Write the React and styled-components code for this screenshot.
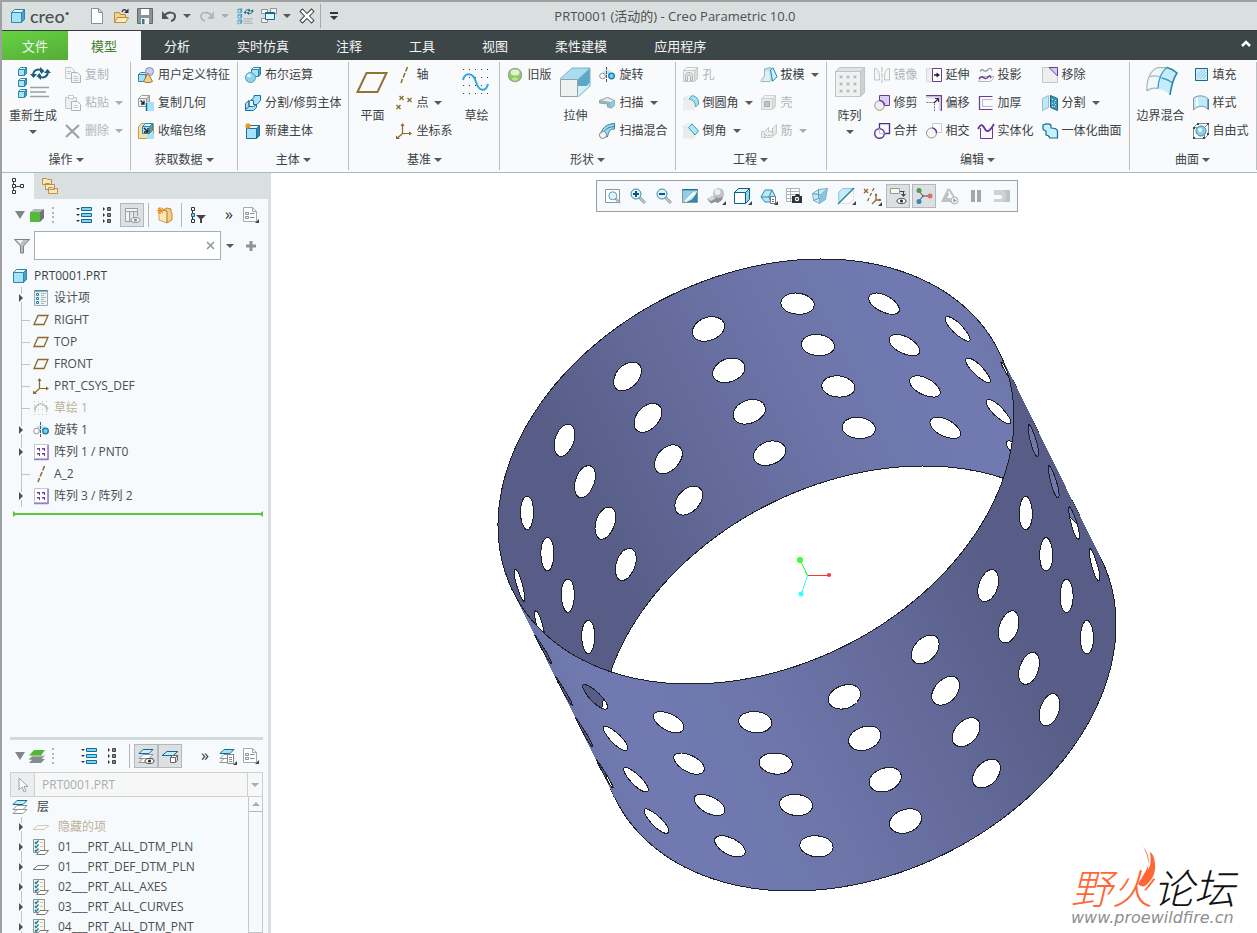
import React, { useState } from "react";
import styled, { createGlobalStyle, css } from "styled-components";

const GlobalStyle = createGlobalStyle`
  * {
    box-sizing: border-box;
  }
  body {
    margin: 0;
    color: #3c4143;
    font-family: "Open Sans", "Noto Sans CJK SC", sans-serif;
    font-size: 12px;
    line-height: 16px;
    background: #ffffff;
  }
  button, input, select {
    margin: 0;
    padding: 0;
    border: none;
    background: none;
    color: inherit;
    font: inherit;
  }
  ul {
    margin: 0;
    padding: 0;
    list-style: none;
  }
`;

/* ---------- icons ---------- */

const BLUE = "#156a8f";
const SKY = "#a6e3fa";
const GREY = "#8f9496";
const PALE = "#c4c8c9";
const PURPLE = "#6a3b9c";
const BROWN = "#8a6a2a";

const cube = (x, y, s, d, front, top, side, line) => (
  <g stroke={line} strokeLinejoin="round">
    <path d={`M${x} ${y + d}l${d} ${-d}h${s}l${-d} ${d}z`} fill={top} />
    <path d={`M${x + s} ${y + d}l${d} ${-d}v${s}l${-d} ${d}z`} fill={side} />
    <path d={`M${x} ${y + d}h${s}v${s}h${-s}z`} fill={front} />
  </g>
);

const skyCube = (x, y, s, d) => cube(x, y, s, d, SKY, "#e3f7fe", "#4aa3c6", "#2f86ab");

const listLines = (
  <>
    <path d="M0 1h4l-2 2zM0 7h4l-2 2zM0 13h4l-2 2z" fill="#333" />
    <path d="M5.500 .500h10v3h-10zM5.500 6.500h10v3h-10zM5.500 12.500h10v3h-10z" fill="#7fd4f7" stroke={BLUE} />
  </>
);

const sheets = (top) => (
  <>
    <path d="M1 14.500l4-4h10l-4 4z" fill="#fff" stroke={GREY} />
    <path d="M1 10.500l4-4h10l-4 4z" fill="#fff" stroke={GREY} />
    <path d="M1 5.500l4-4h10l-4 4z" fill={top} stroke={BLUE} />
  </>
);

const layerSheet = (
  <>
    <path d="M.5.500h11v13H.5z" fill="#fdf6e3" stroke={GREY} />
    <path d="M2 3l1 1.500 2.500-3M2 7l1 1.500 2.500-3M2 11l1 1.500 2.500-3" fill="none" stroke="#1484bd" strokeWidth="1.400" />
    <path d="M7 3.500h3M7 7.500h3" stroke={PALE} />
    <path d="M3.500 15.500l3.500-4h8.500l-3.500 4z" fill="#fff" stroke="#777" />
  </>
);

const revolve = (
  <>
    <path d="M3 8C4 1 12 1 14 8z" fill="#bfe6f5" />
    <circle cx="3.500" cy="9" r="2.800" fill="#fff" stroke={GREY} />
    <circle cx="12.500" cy="9" r="2.800" fill="#6fd0f5" stroke="#1b7ba6" strokeWidth="1.300" />
    <path d="M7.500 0v16" stroke="#555" strokeDasharray="3 1" />
  </>
);

const csys = (
  <>
    <path d="M6.500 1v9.500H15M6.500 10.500L1 15.500" fill="none" stroke={BROWN} strokeWidth="1.200" />
    <path d="M4.500 3l2-3 2 3M13 8.500l3 2-3 2M0 12.500V16h4" fill={BROWN} />
  </>
);

const axis = <path d="M11.500 0L9.700 4.500M9 6L7.200 10.500M6.500 12L5 16" stroke={BROWN} strokeWidth="1.500" />;

const patternSmall = (
  <>
    <path d="M1.500.500h14v14h-14z" fill="#fff" stroke={PALE} />
    <path d="M15 1v14.500H1" fill="none" stroke="#9a7cc4" strokeWidth="1.500" />
    <path d="M4 4h3v3H6V5.500H4zM9 4h3v3h-1V5.500H9zM4 9h3v3H6v-1.500H4zM9 9h3v3h-1v-1.500H9z" fill={PURPLE} />
  </>
);

const plane = <path d="M1 12.500L5 3.500h10l-4 9z" fill="none" stroke={BROWN} strokeWidth="1.300" />;

const docIcon = (
  <>
    <path d="M.5.500h9l4 4v10H.5z" fill="#fff" stroke="#a4a9ab" />
    <path d="M9.500.500v4h4" stroke="#a4a9ab" />
    <path d="M2.500 5.500h3v2h-3zM2.500 9.500h3v2h-3zM7 6.500h4.500M7 10.500h4.500" fill="none" stroke="#8b9194" />
    <path d="M16 12v4h-4z" fill="#444" />
  </>
);

const regen = (
  <>
    {skyCube(1.500, 1.500, 6, 2)}
    {skyCube(1.500, 12.500, 6, 2)}
    {skyCube(1.500, 23.500, 6, 2)}
    <path d="M13 21.500h19M13 26h16M13 30.500h19" stroke="#9a9fa1" strokeWidth="1.500" />
    <path d="M16 10c0-6 5-8 9-5M31 5c0 6-5 8-9 5" fill="none" stroke="#1d5d7d" strokeWidth="2" />
    <path d="M13 8h7l-3.500 4zM27 7h7l-3.500-4zM23 1l4.500 4-4.500 4zM24 6l-4.500 4 4.500 4z" fill="#1d5d7d" />
  </>
);

const magnifier = (
  <>
    <path d="M9.500 9.500l5.500 5.500" stroke="#9aa0a3" strokeWidth="3" />
    <path d="M10 10l5 5" stroke="#d9dcde" strokeWidth="1" />
    <circle cx="6" cy="6" r="5" fill="#dff4fc" stroke="#3b87aa" />
  </>
);

const icons = {
  part: skyCube(1.500, 1.500, 10, 3),
  newFile: <path d="M2.500.500h7l4 4v11h-11zM9.500 .500v4h4" fill="#fff" stroke="#8a8f92" />,
  open: (
    <>
      <path d="M1.500 14.500V4.500h5l1 2h5v8z" fill="#f2d18a" stroke="#b98f3d" />
      <path d="M1.500 14.500l3-5h11l-3 5z" fill="#ffe9b8" stroke="#b98f3d" />
      <path d="M9 4c1-3 3-3 4.500-1" fill="none" stroke="#333" strokeWidth="1.400" />
      <path d="M15.500.500V5H11z" fill="#333" />
    </>
  ),
  save: (
    <>
      <path d="M.5.500h15v15H.5z" fill="#8c9295" stroke="#66696b" />
      <path d="M4 1h8v6H4z" fill="#fff" />
      <path d="M4 10h8v6H4z" fill="#eef0f1" />
      <path d="M5 11h2.500v5H5z" fill="#2a7ba0" />
    </>
  ),
  undo: (
    <>
      <path d="M3 8c4-5 11-4 11 0 0 3-2 4.500-4 5" fill="none" stroke="#4d5356" strokeWidth="2" />
      <path d="M1 3v8h7z" fill="#4d5356" />
    </>
  ),
  redo: (
    <>
      <path d="M13 8C9 3 2 4 2 8c0 3 2 4.500 4 5" fill="none" stroke="#a9aeb0" strokeWidth="1.500" />
      <path d="M15 3v8H8z" fill="#b5b9bb" />
    </>
  ),
  regen,
  windows: (
    <>
      <path d="M.5 1.500h6v4h-6zM.5 10.500h6v4h-6z" fill="#f3f5f5" stroke={GREY} />
      <path d="M9.500.500h6v5h-6z" fill="#f3f5f5" stroke={GREY} />
      <path d="M4.500 4.500h9v7h-9z" fill="#e4f7fd" stroke={BLUE} />
      <path d="M4 5.500h10" stroke={BLUE} />
    </>
  ),
  close: (
    <>
      <path d="M3.500 3.500l9 9M12.500 3.500l-9 9" stroke="#3b3f41" strokeWidth="4.500" strokeLinecap="square" />
      <path d="M3.500 3.500l9 9M12.500 3.500l-9 9" stroke="#fff" strokeWidth="2.500" strokeLinecap="square" />
    </>
  ),
  customize: <path d="M4 4h8v2H4zM4 8h8l-4 4z" fill="#333" />,
  copy: (
    <>
      <path d="M.5.500h6l3 3v8h-9z" fill="#f3f4f5" stroke={PALE} />
      <path d="M6.500 5.500h6l3 3v7h-9z" fill="#f3f4f5" stroke="#afb3b5" />
      <path d="M2 4.500h4M2 6.500h3M8.500 9.500h4M8.500 11.500h5M8.500 13.500h5" stroke={PALE} />
    </>
  ),
  paste: (
    <>
      <path d="M.5 2.500h11v11H.5z" fill="#eceeef" stroke={PALE} />
      <path d="M3.500.500h5v3h-5z" fill="#fff" stroke={PALE} />
      <path d="M6.500 6.500h6l3 3v6h-9z" fill="#f8f9fa" stroke="#afb3b5" />
      <path d="M8.500 10.500h4M8.500 12.500h5" stroke={PALE} />
    </>
  ),
  del: <path d="M1 2l13 13M14 2L1 14" stroke="#9da2a4" strokeWidth="2.200" />,
  udf: (
    <>
      {skyCube(.5, 5.500, 7, 2)}
      <circle cx="11.500" cy="4.500" r="4" fill="#c9cdf3" stroke="#8087c4" />
      <path d="M10 6l4.500 8.500c-2 1.500-7 1.500-9 0z" fill="#f2d08c" stroke="#a37b2e" />
    </>
  ),
  copyGeom: (
    <>
      {cube(.5, .5, 8, 3, "#eef0f1", "#f7f8f8", "#c4c8c9", "#999fa1")}
      <path d="M2.500 5.500l3 3M6 5.500v3.500H3" fill="none" stroke="#222" strokeWidth="1.300" />
      <path d="M9 7h7v9H9z" fill={SKY} />
      <path d="M8.500 8v8" stroke={BLUE} strokeWidth="1.500" />
    </>
  ),
  shrink: (
    <>
      <path d="M.5 3.500l3-3h12v12l-3 3H.5z" fill="#f6dfae" stroke="#c49a48" />
      {skyCube(4.500, .5, 7, 3)}
      <path d="M6 5l3.500 3.500M10 5v4H6" fill="none" stroke="#222" strokeWidth="1.300" />
      <path d="M9 11h7v5H9z" fill={SKY} />
    </>
  ),
  bool: (
    <>
      {skyCube(6.500, .5, 7, 2)}
      <circle cx="5.500" cy="10.500" r="5" fill="#8fd3ea" stroke="#4f9dba" />
      <ellipse cx="4" cy="8.500" rx="2" ry="1.500" fill="#e6f8fd" />
    </>
  ),
  splitBody: (
    <g fill={SKY} stroke="#1b6f99">
      <path d="M5.500 5.500L9 2.500V.500h6.500v5L12 9.500H8.500v-4z" />
      <path d="M.5 8.500l3.500-3v6h4.500l3-2v3l-3 3h-8z" />
      <path d="M4 5.500v6l-3.500 3" fill="none" />
    </g>
  ),
  newBody: (
    <>
      {cube(1.500, 2.500, 10, 3, SKY, "#e8f8fe", "#2f87ad", "#1b6f99")}
      <path d="M3 0v6M0 3h6M1 1l4 4M5 1L1 5" stroke="#e8951c" strokeWidth="1.200" />
    </>
  ),
  planeBig: <path d="M1.500 26L10.500 7h20l-9 19z" fill="none" stroke="#937235" strokeWidth="2" />,
  axis,
  points: <path d="M4 1l4 4M8 1L4 5M12 3l4 4M16 3l-4 4M1 10l4 4M5 10l-4 4" stroke={BROWN} strokeWidth="1.300" transform="translate(-.5 0)" />,
  csys,
  sketchBig: (
    <>
      <g fill="#444">
        {[3, 11, 19, 27].map((y) => [3, 9, 15, 21, 27].map((x) => <rect key={`${x}-${y}`} x={x} y={y} width="1" height="1" />))}
      </g>
      <path d="M3 14c2-8 10-8 13 2s10 10 12 2" fill="none" stroke="#35a9dc" strokeWidth="2" />
    </>
  ),
  legacy: (
    <>
      <circle cx="8" cy="8" r="6.500" fill="#8fd05c" stroke="#9aa79a" strokeWidth="1.500" />
      <ellipse cx="8" cy="5.500" rx="4.500" ry="3" fill="#dff3cf" />
      <ellipse cx="8" cy="12" rx="3" ry="1.500" fill="#b9e690" />
    </>
  ),
  extrudeBig: (
    <>
      <path d="M1 13L13 2h18L19 13z" fill="#a9dcf0" />
      <path d="M19 13L31 2v18L19 31z" fill="#5ba8c9" />
      <path d="M19 31L31 19v-3z" fill="#c9edf9" />
      <path d="M19 31V20h12z" fill="#d3f1fb" />
      <path d="M1 13L13 2h18v18L19 31" fill="none" stroke="#7ab4cc" />
      <path d="M1.500 13.500h17v17h-17z" fill="#f0f1f1" stroke="#9a9fa1" />
    </>
  ),
  revolve,
  sweep: (
    <>
      <path d="M.5 5.500l8-3 7 3v5l-3 2.500-4-1v-3l-8-1z" fill="#93b7c3" stroke="#8ba4ad" />
      <path d="M.5 5.500l8-3 7 3-4 2z" fill="#e3eef2" stroke="#9fafb5" />
      <path d="M11.500 8v5l4-2.500v-5z" fill="#86cfe6" />
    </>
  ),
  sweepBlend: (
    <>
      <path d="M2 10C4 4 8 1 15.500.500V6c-5 0-6 3-7 8z" fill="#9ed7ea" stroke="#2f7fa0" />
      <path d="M4.500 10c2-4 5-6 11-6.500" fill="none" stroke="#2f7fa0" />
      <ellipse cx="4" cy="12" rx="3.500" ry="3.200" fill="#f2f4f5" stroke={GREY} transform="rotate(-30 4 12)" />
    </>
  ),
  hole: (
    <>
      {cube(.5, .5, 11, 3, "#eff0f0", "#f6f7f7", "#dadcdd", "#c6cacb")}
      <path d="M2.500 13.500v-5c0-4 7-4 7 0v5h-2v-4c0-2-3-2-3 0v4z" fill="#e2e4e5" stroke="#aeb2b4" />
    </>
  ),
  round: (
    <>
      <path d="M0 4.500h7c4 0 5 4 5 6v5H0z" fill="#eceded" />
      <path d="M0 4L4 1h5L6 4z" fill="#f6f7f7" stroke="#dcdfe0" />
      <path d="M6 4c5 1 6.500 4 6.500 8l3-3C16 4 13 1 9 .700z" fill="#a5e2f7" stroke="#4a9dbd" />
    </>
  ),
  chamfer: (
    <>
      <path d="M0 4.500h6l6 6v5H0z" fill="#e9ebeb" />
      <path d="M0 4l4-3h5L6 4z" fill="#f6f7f7" stroke="#dcdfe0" />
      <path d="M5.500 4.500L9 1l6.500 7-3.500 4z" fill="#a5ecfb" stroke="#3f8fae" />
    </>
  ),
  draft: (
    <>
      <path d="M0 13.500L3.500 9V2L9 .500l3 2v9l-3 3H0z" fill="#bfe0eb" stroke="#8fb9c9" />
      <path d="M9.500 3L12 .800l4 9-4.500 4.500z" fill="#c9f1fc" stroke="#2487b0" />
      <path d="M0 14h9L8 4 4 4.500V10z" fill="#e3eef2" />
    </>
  ),
  shell: (
    <>
      {cube(.5, .5, 11, 3, "#e8eaea", "#f0f1f1", "#dcdfe0", "#cfd2d3")}
      <path d="M3.500 6.500h5v5h-5z" fill="#bfc3c4" stroke="#aaaeb0" />
    </>
  ),
  rib: (
    <>
      <path d="M.5 8.500v6h10l5-4v-9l-4 4v3h-4v-4l-4 4z" fill="#ebeded" stroke="#c6cacb" />
      <path d="M3.500 15V9.500M11.500 5v7M4 12.500h7l4-4" fill="none" stroke="#b8bcbe" strokeDasharray="2 1" />
    </>
  ),
  patternBig: (
    <>
      {cube(1.500, 1.500, 25, 4, "#f0f1f1", "#dfe2e2", "#cdd1d2", "#c0c4c6")}
      <g fill="#b3b8ba" stroke="#dfe1e2">
        {[9, 16, 23].map((y) => [5, 12, 19].map((x) => <rect key={`${x}-${y}`} x={x + .5} y={y + .5} width="3" height="3" />))}
      </g>
    </>
  ),
  mirror: (
    <>
      <path d="M.5 1.500c4 0 5 4 5 11.500h-5zM15.500 1.500c-4 0-5 4-5 11.500h5z" fill="#f6f7f7" stroke="#bfc3c5" />
      <path d="M8 0v16" stroke="#b5b9bb" strokeDasharray="5 1" />
    </>
  ),
  trim: (
    <>
      <path d="M5.500.500h10v10h-10z" fill="#dcd0f2" stroke={PURPLE} />
      <circle cx="5.500" cy="10.500" r="4.800" fill="#eeefef" stroke={GREY} />
      <path d="M5.500 5.500a5 5 0 0 1 5 5" fill="none" stroke={PURPLE} strokeWidth="1.500" />
    </>
  ),
  merge: (
    <>
      <path d="M5.500 5V.700h10v9.800H11" fill="none" stroke="#4a2f86" strokeWidth="1.300" />
      <circle cx="5.500" cy="10.500" r="4.800" fill="#fff" stroke="#5c3896" strokeWidth="1.400" />
      <path d="M5.500 5.500v5h5" fill="none" stroke={PALE} />
    </>
  ),
  extend: (
    <>
      <path d="M.5 1.500h6v13h-6z" fill="#f0f0f0" stroke="#d5d8d9" />
      <path d="M6.500 1.500h9v13h-9z" fill="#fff" stroke={PURPLE} />
      <path d="M8 8h3" stroke="#222" strokeWidth="1.500" />
      <path d="M10.500 5.500L14 8l-3.500 2.500z" fill="#222" />
    </>
  ),
  offset: (
    <>
      <path d="M0 .700h15.300V16" fill="none" stroke={PURPLE} strokeWidth="1.400" />
      <path d="M0 2.500h13.500V16" fill="none" stroke="#e2d8f0" strokeWidth="2" />
      <path d="M.5 7.500h8V16" fill="none" stroke="#777" strokeDasharray="2 1" />
      <path d="M8 8l4-4M9 3.500h3.500V7" fill="none" stroke="#333" strokeWidth="1.200" />
    </>
  ),
  intersect: (
    <>
      <path d="M6.500.500h9v9h-9z" fill="#fff" stroke={PALE} />
      <circle cx="5.500" cy="10" r="5" fill="#f6f6f6" stroke={GREY} />
      <path d="M6.500 5a5 5 0 0 1 4 5" fill="none" stroke={PURPLE} strokeWidth="1.500" />
    </>
  ),
  project: (
    <>
      <path d="M2 4.500c3-5 4 2 7-1s4-3 5 0" fill="none" stroke={GREY} strokeWidth="1.200" />
      <path d="M.5 14.500l3-5h12v2l-3 3z" fill="#f6f6f6" stroke="#b5b9bb" />
      <path d="M1 12c3-6 5 2 8-1s3-3 4 0" fill="none" stroke={PURPLE} strokeWidth="1.400" />
    </>
  ),
  thicken: (
    <>
      <path d="M14.500 1.500h-13v13h13" fill="none" stroke={PURPLE} strokeWidth="1.200" />
      <path d="M14.500 4.500h-10v7h10" fill="none" stroke="#bbb" />
    </>
  ),
  solidify: (
    <>
      <path d="M2.500 5v10.500h12V4" fill="#faf8fd" stroke={PURPLE} />
      <path d="M0 6c3-6 5-4 7 0s5 2 9-5" fill="none" stroke={PURPLE} strokeWidth="1.800" />
    </>
  ),
  remove: (
    <>
      <path d="M.5.500h15v15H.5z" fill="#eeeeef" stroke="#c3c6c7" />
      <path d="M7 .500h8.500v8.500z" fill="#d7caf0" stroke={PURPLE} />
    </>
  ),
  split: (
    <>
      <path d="M.5 3.500l6-3v12l-6 3z" fill="#bdeaf9" stroke="#9abccb" />
      <path d="M8.500.500l7 3v12l-7-3z" fill="#3e93b7" stroke={BLUE} />
      <path d="M10 4l1 1M13 5l1 1M10 8l1 1M13 9l1 1M10 11l1 1M12 7l1 1M12 11l1 1" stroke="#c8eefb" />
    </>
  ),
  quilt: <path d="M1 2c3-1.500 6-1.500 8 0v3c3 0 6 1 6.500 3v7H8c-1-2-2-3-4-3v-4C2 7.500 1 6 1 6z" fill="#c6f0fc" stroke={BLUE} strokeWidth="1.200" />,
  boundaryBig: (
    <>
      <path d="M2 25C1 15 4 4 13 1.500h8c4 0 8 3 11 5.500-4 6-6 15-7 22-5-5-16-7-23-4z" fill="#eef9fd" />
      <path d="M32 7c-4 6-6 15-7 22-4-4-8-6-12-6.500 0-9 4-18 10-21.500" fill="#c6ecfa" />
      <path d="M2 25C1 15 5 4 13 1.500h8M2 25c4-4 8-3 11-2.500M5 11c4-2 8-1 12 1M13 1.500c3 0 6 0 9 .5" fill="none" stroke="#aeb3b5" strokeWidth="1.200" />
      <path d="M13 22.500c0-9 4-18 10-21.500M17 12c5 1 8 3 11 5" fill="none" stroke="#3aa0c9" strokeWidth="1.300" />
      <path d="M22 1.500c4 1 7 3 10 5.500-4 6-6 15-7 22" fill="none" stroke="#2f86ab" strokeWidth="1.600" />
    </>
  ),
  fill: (
    <>
      <path d="M2.500 1.500h12v12h-12z" fill="#c9eefb" stroke={BLUE} />
      <path d="M4 9l5-6M4 12l8-9M7 12l6-7M10 12l3-4" stroke="#8fc8dd" />
    </>
  ),
  style: (
    <>
      <path d="M.5 3C5 0 11 0 15.500 4v11C12 10 5 10 .5 15z" fill="#bfeaf9" stroke={GREY} />
      <path d="M4 3v8" stroke="#fff" strokeWidth="2" />
      <path d="M15 4v10" stroke={BLUE} />
    </>
  ),
  freestyle: (
    <>
      <path d="M.5 4.500h11v11H.5zM.5 4.500l4-4h11v11l-4 4M11.500 4.500l4-4" fill="none" stroke="#888" />
      <circle cx="8" cy="8" r="5" fill="#8bd0ea" stroke="#3b8fb4" />
      <circle cx="7" cy="7" r="2" fill="#e6f8fd" />
      <path d="M0 4h2v2H0zM0 14h2v2H0zM10 14h2v2h-2zM4 0h2v2H4zM14 0h2v2h-2zM14 10h2v2h-2z" fill="#444" />
    </>
  ),

  treeTab: (
    <>
      <path d="M3.500 4v3M3.500 10v2M5 8.500h5" stroke="#444" />
      <path d="M2.500.500h3v3h-3zM2.500 6.500h3v3h-3zM2.500 12.500h3v3h-3zM10.500 6.500h3v3h-3z" fill="#fff" stroke="#333" />
    </>
  ),
  folders: (
    <g fill="#fbe7bd" stroke="#b8924a">
      <path d="M.5.500h4l1 1h4v5h-9zM3.500 5.500h4l1 1h4v5h-9zM6.500 9.500h4l1 1h4v5h-9z" />
    </g>
  ),
  greenPart: (
    <>
      <path d="M1 5l4-3h10l-3 3z" fill="#b4b9bb" />
      <path d="M11 5l4-3v9l-4 4z" fill="#6f7578" />
      <path d="M1 5h10v10H1z" fill="#55b93a" />
    </>
  ),
  dots: <path d="M7 0h2v2H7zM7 5h2v2H7zM7 9h2v2H7zM7 14h2v2H7z" fill="#b1b6b8" />,
  expand: listLines,
  collapse: (
    <>
      <path d="M3 0v4l2-2zM3 6v4l2-2zM3 12v4l2-2z" fill="#333" />
      <path d="M7.500.500h3v3h-3zM7.500 6.500h3v3h-3zM7.500 12.500h3v3h-3z" fill="#888" stroke="#444" />
    </>
  ),
  columns: (
    <>
      <path d="M1.500 1.500h12v3h-12zM1.500 4.500v10h4v-10M5.500 14.500h4v-10M13.500 4.500V9" fill="#f3f4f4" stroke="#9a9fa1" />
      <ellipse cx="11.500" cy="13" rx="4.500" ry="2.500" fill="#f3f4f4" stroke="#8a8f91" />
      <circle cx="11.500" cy="13" r="1.600" fill="#8a8f91" />
    </>
  ),
  newFolder: (
    <>
      <path d="M2 3l8 1v12l-8-3z" fill="#ffe8b5" stroke="#c9a35c" />
      <path d="M6 3l4-2 4 1v3l1 1v7l-5 3V4z" fill="#f6cf85" stroke="#b58a3d" />
      <path d="M3 0v7M0 3.500h6M1 1l5 5M6 1L1 6" stroke="#f08c1a" strokeWidth="1.200" />
    </>
  ),
  treeFilter: (
    <>
      <path d="M2.500 4v8" stroke="#333" />
      <path d="M1.500 .500h3v3h-3zM1.500 12.500h3v3h-3z" fill="#fff" stroke="#333" />
      <path d="M1.500 6.500h3v3h-3z" fill="#7fd4f7" stroke={BLUE} />
      <path d="M6 8h10l-4 4v4h-2v-4z" fill="#444" />
    </>
  ),
  doc: docIcon,
  funnel: (
    <>
      <path d="M.5 1.500h15L9.500 8v7h-3V8z" fill="#b9bec0" stroke="#7b8082" />
      <path d="M3 2h6L6.500 6z" fill="#f2f3f3" />
    </>
  ),
  designItems: (
    <>
      <path d="M1.500.500h13v15h-13z" fill="#eef3f5" stroke="#a4a9ab" />
      <path d="M1.500 1h13" stroke={BLUE} />
      <path d="M3.500 3.500h2v2h-2zM3.500 7.500h2v2h-2zM3.500 11.500h2v2h-2z" fill="#fff" stroke="#1783b5" />
      <path d="M8 3.500h5M8 5.500h3M8 7.500h5M8 9.500h3M8 11.500h5M8 13.500h3" stroke="#b0b5b7" />
    </>
  ),
  plane,
  sketchOff: (
    <>
      <path d="M2 12c0-11 12-11 12 0M1 9l2-3M15 9l-2-3" fill="none" stroke="#c4c6c0" strokeWidth="1.400" />
      <g fill="#c5c3ba">
        {[1, 5, 9, 14].map((y) => [1, 5, 9, 13].map((x) => <rect key={`${x}-${y}`} x={x} y={y} width="1" height="1" />))}
      </g>
    </>
  ),
  pattern: patternSmall,
  greenLayers: (
    <>
      <path d="M0 15l4-4h12l-4 4zM0 11.500l4-4h12l-4 4z" fill="#858b8e" />
      <path d="M0 10.500l4-3h12l-4 3z" fill="#d9dcdd" />
      <path d="M0 11.500l3-3h12l-3 3z" fill="#858b8e" />
      <path d="M0 7.500l5-5.500h11l-4 5.500z" fill="#51b836" />
    </>
  ),
  layerShow: (
    <>
      {sheets("#c9f0fc")}
      <ellipse cx="11.500" cy="13" rx="4.500" ry="2.500" fill="#fff" stroke="#444" />
      <circle cx="11.500" cy="13" r="1.600" fill="#333" />
    </>
  ),
  layerPart: (
    <>
      <path d="M0 7.500l5-4h11l-5 4z" fill="#c3eefb" stroke={BLUE} />
      {cube(8.500, 7.500, 5, 2, "#fff", "#fff", "#ddd", "#666")}
    </>
  ),
  layerDoc: (
    <>
      {sheets("#a6e3fa")}
      <path d="M8.500 6.500h6v9h-6z" fill="#fff" stroke="#888" />
      <path d="M10 9.500h3M10 11.500h3M10 13.500h3" stroke="#888" />
      <path d="M18 13v4h-4z" fill="#444" />
    </>
  ),
  layers: sheets("#bdebfb"),
  layerOff: <path d="M0 10.500l5-4h11l-5 4z" fill="#fdfbf2" stroke="#cfcab8" />,
  layerSheet,
  layerPlain: <path d="M0 10.500l5-4h11l-5 4z" fill="#fff" stroke="#777" />,
  cursor: <path d="M4 1v12l3-3 2 5 2-1-2-4.500h4z" fill="#f7f7f7" stroke="#9fa4a6" />,

  refit: (
    <>
      <path d="M1.500 1.500h14v13h-14z" fill="#fff" stroke={GREY} />
      <g transform="translate(4 3) scale(.8)">{magnifier}</g>
    </>
  ),
  zoomIn: (
    <>
      {magnifier}
      <path d="M3 6h6M6 3v6" stroke="#11567a" strokeWidth="2" />
    </>
  ),
  zoomOut: (
    <>
      {magnifier}
      <path d="M3 6h6" stroke="#11567a" strokeWidth="2" />
    </>
  ),
  repaint: (
    <>
      <path d="M.5 1.500h15v13H.5z" fill="#c6e9f5" stroke={GREY} />
      <path d="M.5 1h15v1.500H.5z" fill="#1b6f99" />
      <path d="M4 14c5-1 8-4 11-10v10z" fill="#2c88ae" />
      <path d="M1 3h13C9 5 6 9 4 14H1z" fill="#8fd0e6" />
      <path d="M3 13.500C6 11 9 7 13 5" stroke="#fff" strokeWidth="2" />
    </>
  ),
  shading: (
    <>
      <circle cx="10.500" cy="5.500" r="5.500" fill="#bfc3c5" />
      <circle cx="9.500" cy="4" r="3" fill="#eceeee" />
      <path d="M-1 11l5-3 6 2c3 0 5-1 6-4l-2 6-4 3-3-1-4 1.500z" fill="#8f9496" />
      <path d="M-1 11l5-3 4 2-5 3z" fill="#d4d7d8" />
      <path d="M18 13v4h-4z" fill="#444" />
    </>
  ),
  orient: (
    <>
      {cube(.5, .5, 11, 4, "#fff", "#d5f3fd", "#8ed6f0", "#11607f")}
      <path d="M18 13v4h-4z" fill="#444" />
    </>
  ),
  views: (
    <>
      <path d="M1 9l4-7h7l3 6-4 6H5z" fill="#b6eafa" stroke="#2d89ae" />
      <path d="M1 9h8l3-7M9 9l2 5" fill="none" stroke="#2d89ae" />
      <path d="M10.500 8.500h5v7h-5z" fill="#fff" stroke="#777" />
      <path d="M12 11.500h2M12 13.500h2" stroke="#777" />
      <path d="M18 13v4h-4z" fill="#444" />
    </>
  ),
  camera: (
    <>
      <path d="M.5.500h13v13H.5zM.5 3.500h13M.5 6.500h13M.5 10.500h13M4.500 .500v13" fill="#fff" stroke="#aeb3b5" />
      <path d="M6 8h3l1-2h3l1 2h2v7H6z" fill="#333" />
      <circle cx="11" cy="11" r="2.200" fill="#fff" />
      <circle cx="11" cy="11" r="1" fill="#333" />
    </>
  ),
  perspective: (
    <>
      <path d="M.5 5.500l6-4 9-1-2 11-6 4-6-3z" fill="#c6e9f4" stroke="#7fb0c2" />
      <path d="M.5 5.500l8 1.500 7-6.500M8.500 7l-1 8.500M6.500 1.500v9l-5 2M6.500 10.500l7 1" fill="none" stroke="#5a9fb9" />
      <path d="M8.500 7l7-6.500-2 11-6 4z" fill="#86c5dc" />
    </>
  ),
  section: (
    <>
      <path d="M.5 4.500l4-4h11L1 15z" fill="#c6ebf8" stroke="#8fc3d6" />
      <path d="M15.500 1v10l-4 4.500H1z" fill="#fbfbfb" stroke={PALE} strokeDasharray="1 1" />
      <path d="M0 16L16 0" stroke="#2b7da1" strokeWidth="1.200" />
      <path d="M18 13v4h-4z" fill="#444" />
    </>
  ),
  datums: (
    <>
      <path d="M0 1l4 4M4 1L0 5M10 0L8.500 3M7.500 5L6 8M5 10l-1.500 3M12 6v6h5M12 12l-4 4" fill="none" stroke={BROWN} strokeWidth="1.300" />
      <path d="M10.500 7.500L12 5l1.500 2.500zM15 10.500l2.500 1.500-2.500 1.500z" fill={BROWN} />
      <path d="M18 14v4h-4z" fill="#444" />
    </>
  ),
  annot: (
    <>
      <path d="M.5.500h9v5h-9z" fill="#fdf8e4" stroke="#999" />
      <path d="M10 3.500h4.500M13.500 4v3" stroke="#444" />
      <path d="M11 6h5l-2.500 3z" fill="#444" />
      <ellipse cx="11.500" cy="13" rx="4.500" ry="2.500" fill="#fff" stroke="#444" />
      <circle cx="11.500" cy="13" r="1.600" fill="#333" />
    </>
  ),
  spin: (
    <>
      <path d="M3 3l4 5M7 8h6M7 8l-4 5" stroke="#444" />
      <circle cx="3" cy="2.500" r="2.500" fill="#4c9b4a" />
      <circle cx="14" cy="8" r="2.500" fill="#d9706a" />
      <circle cx="3" cy="13.500" r="2.500" fill="#3a86b5" />
    </>
  ),
  simulate: (
    <>
      <path d="M6.500 1L.5 13h10M7 1l5 8M6.500 5l-3 6h5" fill="none" stroke="#bfc3c4" strokeWidth="2" />
      <circle cx="12.500" cy="12.500" r="3.500" fill="#f3f4f4" stroke="#a9adaf" />
      <path d="M11.500 10.500l3 2-3 2z" fill="#8f9496" />
    </>
  ),
  pause: <path d="M3 2h4v12H3zM9 2h4v12H9z" fill="#a3a8aa" />,
  stopFlow: (
    <>
      <path d="M0 2h16v12H0v-3h6c3 0 3-4 0-4H0z" fill="#cfd2d3" />
      <path d="M0 2h9c4 2 4 10 0 12h7V2z" fill="#bfc3c4" />
    </>
  ),
};

const bigIcons = ["regen", "planeBig", "sketchBig", "extrudeBig", "patternBig", "boundaryBig"];

const Svg = styled.svg`
  display: block;
  flex: none;
  overflow: visible;
`;

function Icon({ name, size = 16 }) {
  const box = bigIcons.includes(name) ? 32 : 16;
  return (
    <Svg width={size} height={size} viewBox={`0 0 ${box} ${box}`} fill="none" aria-hidden="true">
      {icons[name]}
    </Svg>
  );
}

const Caret = styled.span`
  flex: none;
  width: 0;
  height: 0;
  border: 4px solid transparent;
  border-top-color: ${(props) => (props.$off ? "#a9adaf" : "#55595b")};
  border-bottom: none;
`;

/* ---------- window, title and tabs ---------- */

const Window = styled.div`
  display: flex;
  flex-direction: column;
  height: 100vh;
  overflow: hidden;
  border-top: 2px solid #a0a0a0;
  border-left: 2px solid #a0a0a0;
`;

const TitleBar = styled.header`
  display: flex;
  flex: none;
  align-items: center;
  height: 28px;
  padding-left: 8px;
  background: #dae0df;
`;

const Brand = styled.span`
  margin: 0 20px 0 4px;
  color: #4b5052;
  font: 500 18px/24px Lato, sans-serif;
  sup {
    font-size: 8px;
    line-height: 8px;
  }
`;

const QuickBar = styled.div`
  display: flex;
  align-items: center;
  gap: 8px;
`;

const QuickButton = styled.button`
  display: flex;
  align-items: center;
  gap: 6px;
`;

const QuickRule = styled.span`
  width: 1px;
  height: 24px;
  margin: 0 -3px;
  background: #a4aaac;
`;

const WindowTitle = styled.div`
  flex: 1;
  padding-right: 20%;
  color: #4b5052;
  font-size: 13px;
  text-align: center;
  white-space: nowrap;
`;

const Tabs = styled.nav`
  display: flex;
  flex: none;
  height: 30px;
  background: #3d4647;
  border-top: 1px solid #343c3d;
`;

const Tab = styled.button`
  padding: 0 24px 0 23px;
  color: #f2f5f5;
  font-size: 13px;
  ${(props) =>
    props.$file &&
    css`
      padding: 0 20px;
      background: linear-gradient(165deg, #66d342, #55ab38);
    `}
  ${(props) =>
    props.$active &&
    css`
      background: #f8fafc;
      color: #43802a;
    `}
`;

const Collapse = styled.button`
  margin-left: auto;
  padding: 0 6px 6px;
`;

/* ---------- ribbon ---------- */

const Ribbon = styled.section`
  display: flex;
  flex: none;
  height: 113px;
  background: #f8fafc;
  border-bottom: 1px solid #a9bcbd;
`;

const Group = styled.div`
  display: flex;
  flex: none;
  flex-direction: column;
  margin: 2px 0;
  border-right: 1px solid #b9bfc1;
`;

const GroupBody = styled.div`
  display: flex;
  flex: none;
  gap: 8px;
  height: 83px;
  padding: 0 7px;
`;

const GroupLabel = styled.button`
  display: flex;
  flex: none;
  align-items: center;
  justify-content: center;
  gap: 3px;
  height: 27px;
  padding-top: 3px;
`;

const Column = styled.div`
  display: flex;
  flex-direction: column;
  margin-top: -1px;
`;

const Item = styled.button`
  display: flex;
  align-items: center;
  height: 28px;
  gap: 4px;
  color: ${(props) => (props.$off ? "#b1b5b7" : "#3c4143")};
  white-space: nowrap;
  ${Caret} {
    margin-left: 2px;
  }
`;

const BigItem = styled.button`
  display: flex;
  flex-direction: column;
  align-items: center;
  min-width: 32px;
  padding-top: 4px;
  white-space: nowrap;
  span:first-of-type {
    margin: 10px 0 6px;
  }
`;

const ribbon = [
  {
    label: "操作",
    parts: [
      { icon: "regen", text: "重新生成", menu: true },
      [
        ["copy", "复制", { off: true }],
        ["paste", "粘贴", { off: true, menu: true }],
        ["del", "删除", { off: true, menu: true }],
      ],
    ],
  },
  {
    label: "获取数据",
    parts: [
      [
        ["udf", "用户定义特征"],
        ["copyGeom", "复制几何"],
        ["shrink", "收缩包络"],
      ],
    ],
  },
  {
    label: "主体",
    parts: [
      [
        ["bool", "布尔运算"],
        ["splitBody", "分割/修剪主体"],
        ["newBody", "新建主体"],
      ],
    ],
  },
  {
    label: "基准",
    parts: [
      { icon: "planeBig", text: "平面" },
      [
        ["axis", "轴"],
        ["points", "点", { menu: true }],
        ["csys", "坐标系"],
      ],
      { icon: "sketchBig", text: "草绘" },
    ],
  },
  {
    label: "形状",
    parts: [
      [["legacy", "旧版"]],
      { icon: "extrudeBig", text: "拉伸" },
      [
        ["revolve", "旋转"],
        ["sweep", "扫描", { menu: true }],
        ["sweepBlend", "扫描混合"],
      ],
    ],
  },
  {
    label: "工程",
    parts: [
      [
        ["hole", "孔", { off: true }],
        ["round", "倒圆角", { menu: true }],
        ["chamfer", "倒角", { menu: true }],
      ],
      [
        ["draft", "拔模", { menu: true }],
        ["shell", "壳", { off: true }],
        ["rib", "筋", { off: true, menu: true }],
      ],
    ],
  },
  {
    label: "编辑",
    parts: [
      { icon: "patternBig", text: "阵列", menu: true },
      [
        ["mirror", "镜像", { off: true }],
        ["trim", "修剪"],
        ["merge", "合并"],
      ],
      [
        ["extend", "延伸"],
        ["offset", "偏移"],
        ["intersect", "相交"],
      ],
      [
        ["project", "投影"],
        ["thicken", "加厚"],
        ["solidify", "实体化"],
      ],
      [
        ["remove", "移除"],
        ["split", "分割", { menu: true }],
        ["quilt", "一体化曲面"],
      ],
    ],
  },
  {
    label: "曲面",
    parts: [
      { icon: "boundaryBig", text: "边界混合" },
      [
        ["fill", "填充"],
        ["style", "样式"],
        ["freestyle", "自由式"],
      ],
    ],
  },
];

function RibbonPart({ part }) {
  if (!Array.isArray(part)) {
    return (
      <BigItem type="button">
        <Icon name={part.icon} size={32} />
        <span>{part.text}</span>
        {part.menu && <Caret />}
      </BigItem>
    );
  }
  return (
    <Column>
      {part.map(([icon, text, opts = {}]) => (
        <Item key={text} type="button" $off={opts.off} disabled={opts.off}>
          <Icon name={icon} />
          {text}
          {opts.menu && <Caret $off={opts.off} />}
        </Item>
      ))}
    </Column>
  );
}

/* ---------- side panel ---------- */

const Work = styled.div`
  display: flex;
  flex: 1;
  min-height: 0;
`;

const Side = styled.aside`
  display: flex;
  flex: none;
  flex-direction: column;
  width: 269px;
  background: #f7fafc;
  border-right: 3px solid #dae0df;
`;

const SideTabs = styled.div`
  display: flex;
  flex: none;
  height: 26px;
  margin-right: -3px;
  background: #dae0df;
`;

const SideTab = styled.button`
  display: flex;
  align-items: center;
  justify-content: center;
  width: 32px;
  background: ${(props) => (props.$active ? "#f7fafc" : "transparent")};
`;

const ToolRow = styled.div`
  display: flex;
  flex: none;
  align-items: center;
  height: 32px;
  padding: 0 5px 0 13px;
`;

const Tool = styled.button`
  display: flex;
  flex: none;
  align-items: center;
  justify-content: center;
  width: 24px;
  height: 24px;
  border: 1px solid ${(props) => (props.$on ? "#b3b8ba" : "transparent")};
  background: ${(props) => (props.$on ? "#dddfe2" : "none")};
`;

const Fold = styled.span`
  flex: none;
  margin-right: 4px;
  border: 5px solid transparent;
  border-top: 8px solid #808688;
  border-bottom: none;
`;

const Rule = styled.span`
  flex: none;
  width: 1px;
  height: 24px;
  margin: 0 4px;
  background: #b3b9bb;
`;

const Spacer = styled.span`
  flex: 1;
`;

const More = styled.button`
  width: 16px;
  height: 24px;
  margin-right: 2px;
  padding-bottom: 3px;
  color: #333;
  font-size: 16px;
`;

const FilterRow = styled.div`
  display: flex;
  flex: none;
  align-items: center;
  gap: 4px;
  height: 29px;
  padding: 0 11px 0 12px;
`;

const FilterBox = styled.label`
  display: flex;
  flex: 1;
  align-items: center;
  height: 29px;
  padding: 0 0 0 4px;
  border: 1px solid #a4afb3;
  background: #ffffff;
  input {
    flex: 1;
    min-width: 0;
    outline: none;
  }
`;

const GreyGlyph = styled.button`
  width: 14px;
  color: #8f9496;
  svg {
    display: block;
  }
`;

const Tree = styled.ul`
  flex: none;
  padding-top: 5px;
`;

const Root = styled.li`
  display: flex;
  align-items: center;
  gap: 6px;
  height: 22px;
  padding-left: 10px;
`;

const Row = styled.li`
  display: flex;
  align-items: center;
  height: ${(props) => props.$height}px;
  color: ${(props) => (props.$dim ? "#bbb29b" : "#4a4e50")};
  white-space: nowrap;
`;

const Guide = styled.span`
  position: relative;
  flex: none;
  align-self: stretch;
  width: 12px;
  margin-left: 19px;
  border-left: 1px solid #bfc4c6;
  &::before {
    position: absolute;
    top: 50%;
    left: 0;
    content: "";
    ${(props) =>
      props.$open
        ? css`
            left: -3px;
            margin-top: -4px;
            border: 4px solid #f7fafc;
            border-left-color: #4c5052;
            border-right: 2px solid #f7fafc;
          `
        : css`
            width: 8px;
            border-top: 1px solid #bfc4c6;
          `}
  }
`;

const RowText = styled.span`
  margin-left: ${(props) => props.$gap}px;
`;

const InsertBar = styled.div`
  display: flex;
  flex: none;
  justify-content: space-between;
  margin: 4px 5px 0 11px;
  height: 6px;
  background: linear-gradient(#5fc63d, #5fc63d) 0 50% / 100% 2px no-repeat;
  &::before,
  &::after {
    content: "";
    border: 3px solid transparent;
    border-left: 4px solid #5fc63d;
    border-right: none;
  }
  &::after {
    border-left: none;
    border-right: 4px solid #5fc63d;
  }
`;

const LayerPane = styled.section`
  display: flex;
  flex: none;
  flex-direction: column;
  height: 196px;
  margin-top: auto;
`;

const Splitter = styled.div`
  flex: none;
  height: 3px;
  margin: 0 5px 0 8px;
  background: #d3dadb;
`;

const ModelPick = styled.div`
  display: flex;
  flex: none;
  align-items: center;
  height: 25px;
  margin: 0 5px 0 8px;
  border: 1px solid #cbd0d1;
  background: #f7f7f7;
  select {
    flex: 1;
    height: 100%;
    padding-left: 7px;
    border: solid #cbd0d1;
    border-width: 0 1px;
    color: #a9adaf;
    opacity: 1;
    appearance: none;
  }
  > span {
    display: flex;
    justify-content: center;
    align-items: center;
    align-self: stretch;
    width: 23px;
    background: #ebedee;
  }
  > span:last-child {
    width: 14px;
    background: none;
  }
`;

const LayerBody = styled.div`
  display: flex;
  flex: 1;
  min-height: 0;
  margin-right: 5px;
  overflow: hidden;
`;

const LayerTree = styled.ul`
  flex: 1;
`;

const LayerRoot = styled(Root)`
  height: 20px;
  gap: 9px;
`;

const ScrollTrack = styled.div`
  width: 15px;
  border: 1px solid #c3c8ca;
  border-top: none;
`;

const ScrollUp = styled.button`
  display: flex;
  align-items: center;
  justify-content: center;
  width: 13px;
  height: 15px;
  border-bottom: 1px solid #b3b8ba;
  ${Caret} {
    transform: rotate(180deg);
  }
`;

const modelRows = [
  { icon: "designItems", text: "设计项", open: true },
  { icon: "plane", text: "RIGHT" },
  { icon: "plane", text: "TOP" },
  { icon: "plane", text: "FRONT" },
  { icon: "csys", text: "PRT_CSYS_DEF" },
  { icon: "sketchOff", text: "草绘 1", dim: true },
  { icon: "revolve", text: "旋转 1", open: true },
  { icon: "pattern", text: "阵列 1 / PNT0", open: true },
  { icon: "axis", text: "A_2" },
  { icon: "pattern", text: "阵列 3 / 阵列 2", open: true },
];

const layerRows = [
  { icon: "layerOff", text: "隐藏的项", dim: true },
  { icon: "layerSheet", text: "01___PRT_ALL_DTM_PLN" },
  { icon: "layerPlain", text: "01___PRT_DEF_DTM_PLN" },
  { icon: "layerSheet", text: "02___PRT_ALL_AXES" },
  { icon: "layerSheet", text: "03___PRT_ALL_CURVES" },
  { icon: "layerSheet", text: "04___PRT_ALL_DTM_PNT" },
];

function SidePanel() {
  const [filter, setFilter] = useState("");
  return (
    <Side>
      <SideTabs>
        <SideTab type="button" $active aria-label="模型树">
          <Icon name="treeTab" />
        </SideTab>
        <SideTab type="button" aria-label="文件夹">
          <Icon name="folders" />
        </SideTab>
      </SideTabs>
      <ToolRow>
        <Fold />
        <Icon name="greenPart" />
        <Icon name="dots" />
        <Spacer />
        <Tool type="button" aria-label="展开"><Icon name="expand" /></Tool>
        <Tool type="button" aria-label="折叠"><Icon name="collapse" /></Tool>
        <Tool type="button" $on aria-label="树列"><Icon name="columns" /></Tool>
        <Rule />
        <Tool type="button" aria-label="新建文件夹"><Icon name="newFolder" /></Tool>
        <Rule />
        <Tool type="button" aria-label="树过滤器"><Icon name="treeFilter" /></Tool>
        <Spacer />
        <More type="button">»</More>
        <Tool type="button" aria-label="设置"><Icon name="doc" /></Tool>
      </ToolRow>
      <FilterRow>
        <Icon name="funnel" />
        <FilterBox>
          <input type="text" aria-label="过滤" value={filter} onChange={(e) => setFilter(e.target.value)} />
          <GreyGlyph type="button" aria-label="清除" onClick={() => setFilter("")}>
            <svg width="9" height="9" stroke="currentColor" strokeWidth="1.500">
              <path d="M1 1l7 7M8 1L1 8" />
            </svg>
          </GreyGlyph>
        </FilterBox>
        <GreyGlyph type="button" aria-label="过滤选项">
          <svg width="14" height="8" fill="#55595b">
            <path d="M1 2h8L5 6z" />
          </svg>
        </GreyGlyph>
        <GreyGlyph type="button" aria-label="添加">
          <svg width="14" height="12" stroke="currentColor" strokeWidth="3">
            <path d="M8 1v10M3 6h10" />
          </svg>
        </GreyGlyph>
      </FilterRow>
      <Tree>
        <Root>
          <Icon name="part" />
          PRT0001.PRT
        </Root>
        {modelRows.map((row) => (
          <Row key={row.text} $height={22} $dim={row.dim}>
            <Guide $open={row.open} />
            <Icon name={row.icon} />
            <RowText $gap={5}>{row.text}</RowText>
          </Row>
        ))}
      </Tree>
      <InsertBar />
      <LayerPane>
        <Splitter />
        <ToolRow>
          <Fold />
          <Icon name="greenLayers" />
          <Icon name="dots" />
          <Spacer />
          <Tool type="button" aria-label="展开层"><Icon name="expand" /></Tool>
          <Tool type="button" aria-label="折叠层"><Icon name="collapse" /></Tool>
          <Rule />
          <Tool type="button" $on aria-label="显示层"><Icon name="layerShow" /></Tool>
          <Tool type="button" $on aria-label="层零件"><Icon name="layerPart" /></Tool>
          <Spacer />
          <More type="button">»</More>
          <Tool type="button" aria-label="层树"><Icon name="layerDoc" /></Tool>
          <Tool type="button" aria-label="层设置"><Icon name="doc" /></Tool>
        </ToolRow>
        <ModelPick>
          <span>
            <Icon name="cursor" />
          </span>
          <select disabled aria-label="活动模型">
            <option>PRT0001.PRT</option>
          </select>
          <span>
            <Caret $off />
          </span>
        </ModelPick>
        <LayerBody>
          <LayerTree>
            <LayerRoot>
              <Icon name="layers" />层
            </LayerRoot>
            {layerRows.map((row) => (
              <Row key={row.text} $height={20} $dim={row.dim}>
                <Guide $open />
                <Icon name={row.icon} />
                <RowText $gap={9}>{row.text}</RowText>
              </Row>
            ))}
          </LayerTree>
          <ScrollTrack>
            <ScrollUp type="button" aria-label="向上滚动">
              <Caret $off />
            </ScrollUp>
          </ScrollTrack>
        </LayerBody>
      </LayerPane>
    </Side>
  );
}

/* ---------- graphics area ---------- */

const View = styled.main`
  position: relative;
  flex: 1;
  min-width: 0;
  background: #ffffff;
`;

const Scene = styled.svg`
  display: block;
  width: 100%;
  height: 100%;
`;

const ViewBar = styled.div`
  position: absolute;
  top: 7px;
  left: calc(50% - 168px);
  display: flex;
  gap: 2px;
  padding: 3px;
  border: 1px solid #9ba0a3;
  background: #f7fafc;
`;

const viewTools = [
  ["refit", "重新调整"],
  ["zoomIn", "放大"],
  ["zoomOut", "缩小"],
  ["repaint", "重画"],
  ["shading", "显示样式"],
  ["orient", "已保存方向"],
  ["views", "视图管理器"],
  ["camera", "视图图像"],
  ["perspective", "透视图"],
  ["section", "截面"],
  ["datums", "基准显示过滤器"],
  ["annot", "注释显示", true],
  ["spin", "旋转中心", true],
  ["simulate", "仿真"],
  ["pause", "暂停"],
  ["stopFlow", "停止"],
];

const ORIGIN = [756, 471.5];
const MAJOR = 271;
const MINOR = 195.7;
const U = [0.897, -0.442];
const V = [0.442, 0.897];
const AXIS = [102, 207];
const AXIS_LENGTH = 333.6;
const HOLE_RADIUS = 16.7;
const RAD = Math.PI / 180;

function surfacePoint(deg, t) {
  const a = MAJOR * Math.cos(deg * RAD);
  const b = MINOR * Math.sin(deg * RAD);
  const x = ORIGIN[0] + a * U[0] + b * V[0] + t * AXIS[0];
  const y = ORIGIN[1] + a * U[1] + b * V[1] + t * AXIS[1];
  return `${x.toFixed(1)} ${y.toFixed(1)}`;
}

function rim(from, to, t) {
  const points = [];
  const steps = 90;
  for (let i = 0; i <= steps; i++) {
    points.push(surfacePoint(from + ((to - from) * i) / steps, t));
  }
  return points.join("L");
}

function holePath(deg, t) {
  const points = [];
  for (let a = 0; a < 360; a += 10) {
    const side = Math.asin((HOLE_RADIUS * Math.cos(a * RAD)) / MAJOR) / RAD;
    points.push(surfacePoint(deg + side, t + (HOLE_RADIUS * Math.sin(a * RAD)) / AXIS_LENGTH));
  }
  return `M${points.join("L")}Z`;
}

function shade(light) {
  const dark = [87, 93, 134];
  const bright = [113, 122, 176];
  return `rgb(${dark.map((c, i) => Math.round(c + (bright[i] - c) * light)).join(",")})`;
}

function Wall({ id, from, light }) {
  const holes = [];
  for (let k = 0; k < 9; k++) {
    [0.2, 0.4, 0.6, 0.8].forEach((t) => holes.push(holePath(from + 14.3 + 20 * k, t)));
  }
  const stops = [];
  for (let d = 0; d <= 180; d += 10) {
    const deg = from + d;
    stops.push({
      offset: (Math.cos(deg * RAD) + 1) / 2,
      color: shade(Math.max(0, Math.cos((deg - light) * RAD))),
    });
  }
  stops.sort((a, b) => a.offset - b.offset);
  return (
    <g>
      <linearGradient
        id={id}
        gradientUnits="userSpaceOnUse"
        x1={ORIGIN[0] - MAJOR * U[0]}
        y1={ORIGIN[1] - MAJOR * U[1]}
        x2={ORIGIN[0] + MAJOR * U[0]}
        y2={ORIGIN[1] + MAJOR * U[1]}
      >
        {stops.map((s) => (
          <stop key={s.offset} offset={s.offset} stopColor={s.color} />
        ))}
      </linearGradient>
      <path
        d={`M${rim(from, from + 180, 0)}L${rim(from + 180, from, 1)}Z${holes.join("")}`}
        fill={`url(#${id})`}
        fillRule="evenodd"
      />
      <path
        d={`M${rim(from, from + 180, 0)}M${rim(from, from + 180, 1)}${holes.join("")}`}
        fill="none"
        stroke="#1d1f26"
      />
    </g>
  );
}

const Mark = styled.div`
  position: absolute;
  right: 22px;
  bottom: 6px;
  color: #111111;
  text-align: left;
`;

const MarkName = styled.div`
  position: relative;
  font: italic 300 41px/46px "Noto Sans CJK SC", sans-serif;
  b {
    color: #ff6633;
    font-weight: 300;
  }
  svg {
    position: absolute;
    top: -18px;
    left: 65px;
  }
`;

const MarkUrl = styled.a`
  display: block;
  color: #8e8e8e;
  font: italic 16px/18px "DejaVu Sans", sans-serif;
  text-decoration: none;
`;

function GraphicsView() {
  return (
    <View>
      <Scene viewBox="271 173 986 760" shapeRendering="crispEdges">
        <Wall id="innerWall" from={180} light={323} />
        <Wall id="outerWall" from={0} light={143} />
        <path d="M807.500 575.500L800 560" stroke="#33ff33" />
        <path d="M807.500 575.500h21" stroke="#ff3333" />
        <path d="M807.500 575.500l-6 18" stroke="#33ffff" />
        <g shapeRendering="auto">
          <circle cx="800" cy="560" r="3" fill="#33ff33" />
          <circle cx="829" cy="575" r="2" fill="#ff3333" />
          <circle cx="801" cy="594" r="2.500" fill="#33ffff" />
        </g>
      </Scene>
      <ViewBar>
        {viewTools.map(([icon, label, on]) => (
          <Tool key={icon} type="button" aria-label={label} $on={on}>
            <Icon name={icon} />
          </Tool>
        ))}
      </ViewBar>
      <Mark>
        <MarkName>
          <b>野火</b>论坛
          <svg width="24" height="46" viewBox="0 0 24 46" fill="#ff6633">
            <path d="M6 1c8 8 9 18 2 28l-6 10c2 2 5 3 7 2 9-7 12-16 9-28-1-3-2-5-4-6 1 8 1 13-2 18 1-10-1-18-6-24z" />
          </svg>
        </MarkName>
        <MarkUrl href="#">www.proewildfire.cn</MarkUrl>
      </Mark>
    </View>
  );
}

const tabs = ["分析", "实时仿真", "注释", "工具", "视图", "柔性建模", "应用程序"];

function App() {
  return (
    <>
      <GlobalStyle />
      <Window>
        <TitleBar>
          <Icon name="part" />
          <Brand>
            creo<sup>•</sup>
          </Brand>
          <QuickBar>
            <QuickButton type="button" aria-label="新建"><Icon name="newFile" /></QuickButton>
            <QuickButton type="button" aria-label="打开"><Icon name="open" /></QuickButton>
            <QuickButton type="button" aria-label="保存"><Icon name="save" /></QuickButton>
            <QuickButton type="button" aria-label="撤消"><Icon name="undo" /><Caret /></QuickButton>
            <QuickButton type="button" aria-label="重做"><Icon name="redo" /><Caret $off /></QuickButton>
            <QuickButton type="button" aria-label="重新生成"><Icon name="regen" /></QuickButton>
            <QuickButton type="button" aria-label="窗口"><Icon name="windows" /><Caret /></QuickButton>
            <QuickButton type="button" aria-label="关闭"><Icon name="close" /></QuickButton>
            <QuickRule />
            <QuickButton type="button" aria-label="自定义"><Icon name="customize" /></QuickButton>
          </QuickBar>
          <WindowTitle>PRT0001 (活动的) - Creo Parametric 10.0</WindowTitle>
        </TitleBar>
        <Tabs>
          <Tab type="button" $file>文件</Tab>
          <Tab type="button" $active>模型</Tab>
          {tabs.map((name) => (
            <Tab key={name} type="button">{name}</Tab>
          ))}
          <Collapse type="button" aria-label="最小化功能区">
            <svg width="10" height="7" fill="none" stroke="#ffffff" strokeWidth="2.500">
              <path d="M1 6l4-4 4 4" />
            </svg>
          </Collapse>
        </Tabs>
        <Ribbon>
          {ribbon.map((group) => (
            <Group key={group.label}>
              <GroupBody>
                {group.parts.map((part, i) => (
                  <RibbonPart key={i} part={part} />
                ))}
              </GroupBody>
              <GroupLabel type="button">
                {group.label}
                <Caret />
              </GroupLabel>
            </Group>
          ))}
        </Ribbon>
        <Work>
          <SidePanel />
          <GraphicsView />
        </Work>
      </Window>
    </>
  );
}

export default App;
